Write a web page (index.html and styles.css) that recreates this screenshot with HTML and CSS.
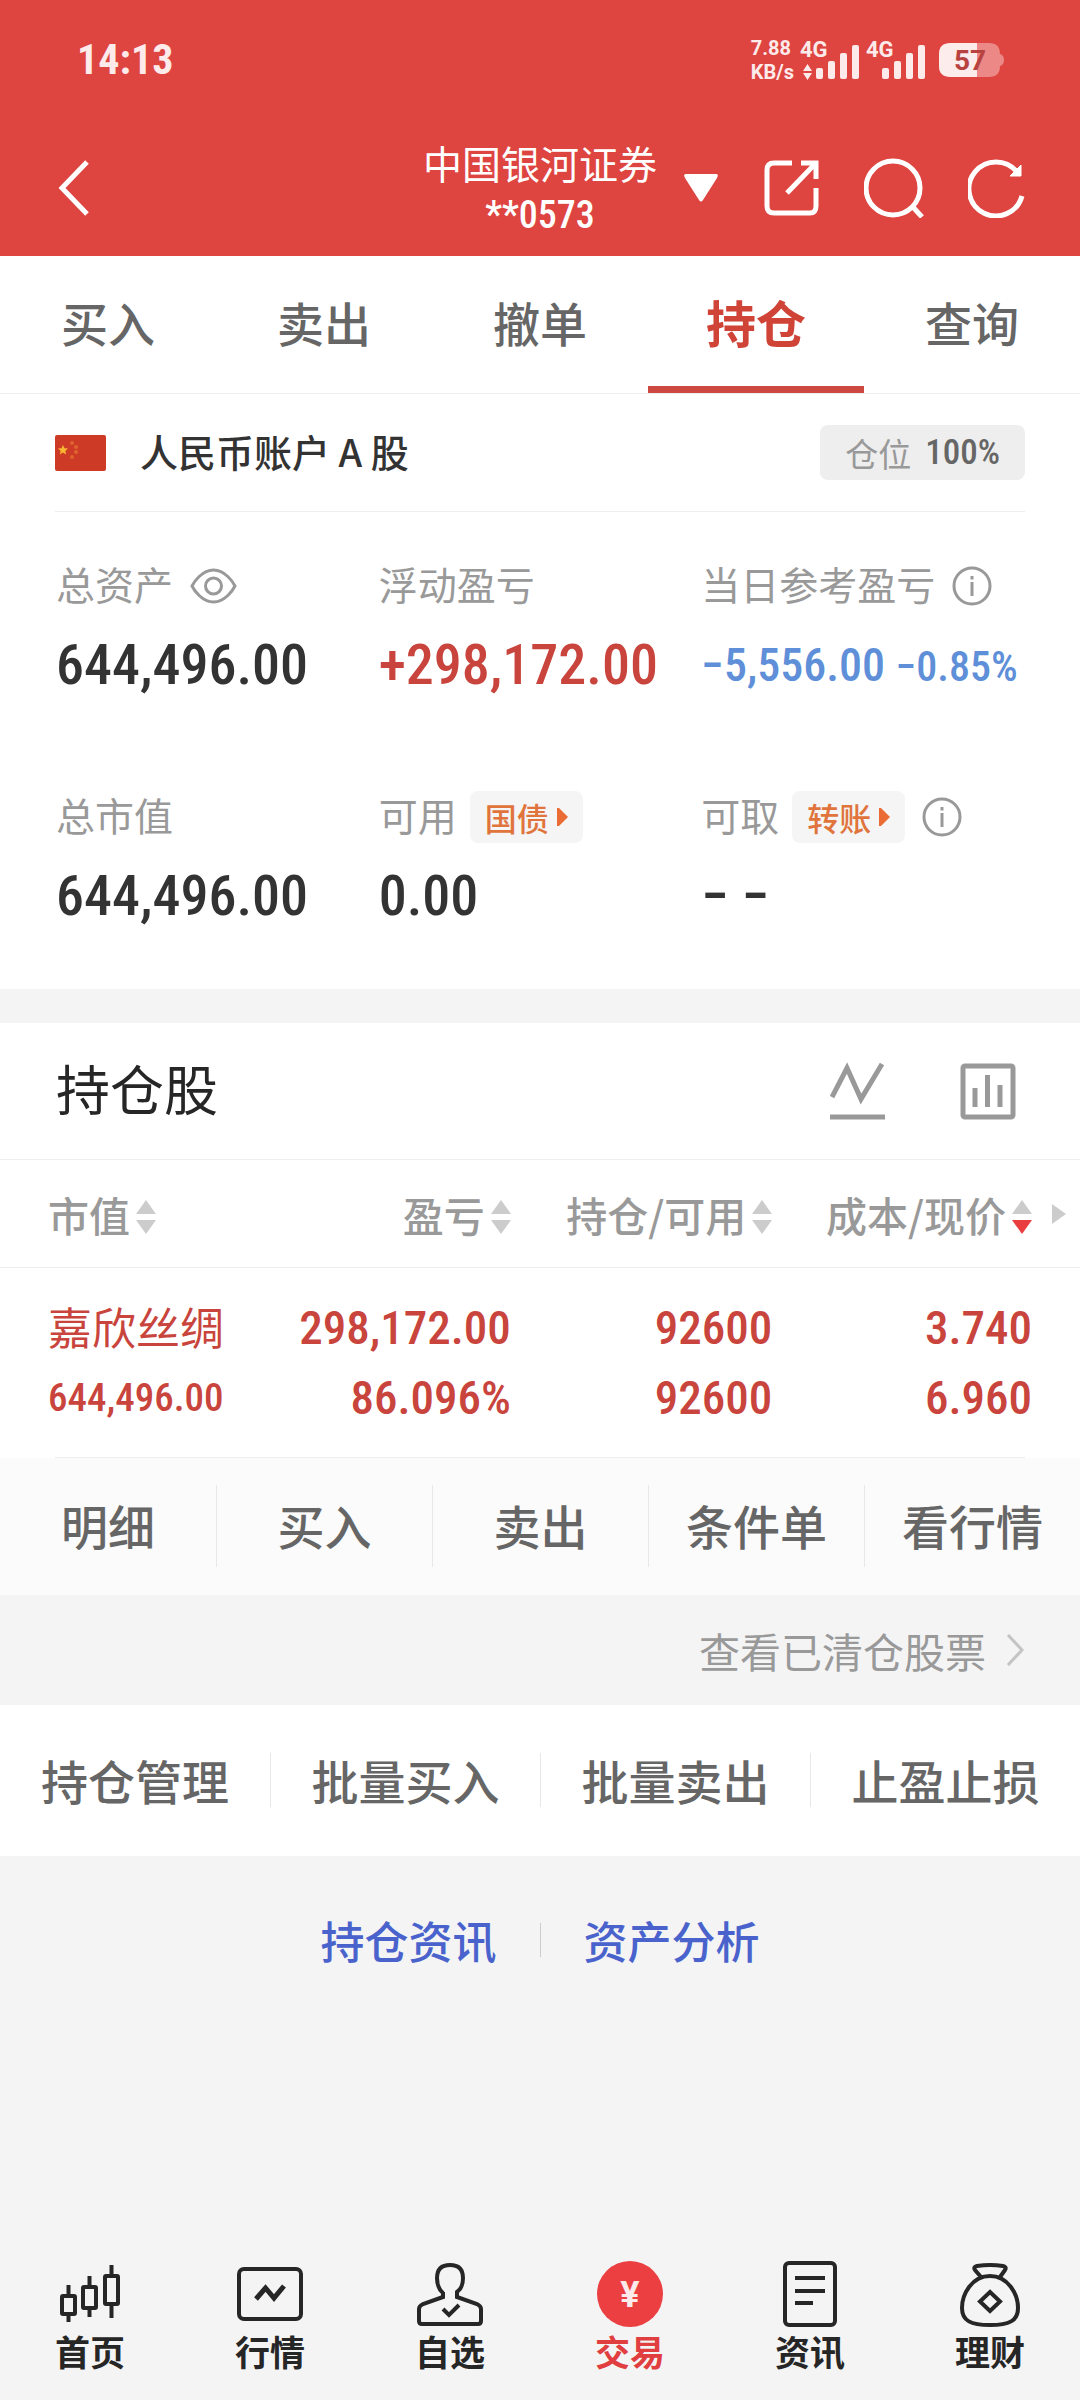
FILE: index.html
```html
<!DOCTYPE html>
<html lang="zh-CN">
<head>
<meta charset="utf-8">
<meta name="viewport" content="width=device-width, initial-scale=1">
<title>持仓</title>
<link rel="stylesheet" href="styles.css">
</head>
<body>
<div class="app">
  <header class="top">
    <div class="status">
      <span class="clock">14:13</span>
      <div class="status-right">
        <span class="speed"><span>7.88</span><span>KB/s</span></span>
        <svg class="signal" width="60" height="46" viewBox="0 -4 60 46" aria-label="4G">
          <text x="0" y="16">4G</text>
          <path d="M3 30L7.500 23L12 30ZM3 32L7.500 39L12 32Z"/>
          <rect x="16" y="27" width="7" height="11" rx="2"/><rect x="28" y="20" width="7" height="18" rx="2"/><rect x="40" y="12" width="7" height="26" rx="2"/><rect x="52" y="4" width="7" height="34" rx="2"/>
        </svg>
        <svg class="signal" width="60" height="46" viewBox="0 -4 60 46" aria-label="4G">
          <text x="0" y="16">4G</text>
          <rect x="16" y="27" width="7" height="11" rx="2"/><rect x="28" y="20" width="7" height="18" rx="2"/><rect x="40" y="12" width="7" height="26" rx="2"/><rect x="52" y="4" width="7" height="34" rx="2"/>
        </svg>
        <svg class="battery" width="66" height="34" viewBox="0 0 66 34" aria-label="57%">
          <path d="M12 0H50Q61 0 61 11Q65 12 65 17Q65 22 61 23Q61 34 50 34H12Q0 34 0 23V11Q0 0 12 0Z" fill="#ec8886"/>
          <path d="M12 0H38V34H12Q0 34 0 23V11Q0 0 12 0Z" fill="#fdecec"/>
          <text x="31" y="27" text-anchor="middle">57</text>
        </svg>
      </div>
    </div>
    <nav class="bar">
      <button class="icon-btn back" aria-label="返回"><svg width="32" height="58" viewBox="0 0 32 58"><path d="M29 3L4 29L29 55" fill="none" stroke="#fff" stroke-width="5"/></svg></button>
      <div class="title"><h1>中国银河证券</h1><span class="num">**0573</span></div>
      <div class="bar-right">
        <button class="icon-btn drop" aria-label="切换账户"><svg width="34" height="28" viewBox="0 0 34 28"><path d="M2 0H32Q35 0 33 4L19 26Q17 29 15 26L1 4Q-1 0 2 0Z" fill="#fff"/></svg></button>
        <button class="icon-btn" aria-label="分享"><svg width="56" height="56" viewBox="0 0 56 56" fill="none" stroke="#fff" stroke-width="5"><path d="M28 3H10Q3 3 3 10V46Q3 53 10 53H46Q52 53 52 46V28M37 3H52V19M52 3L23 33"/></svg></button>
        <button class="icon-btn" aria-label="搜索"><svg width="60" height="60" viewBox="0 0 60 60" fill="none" stroke="#fff" stroke-width="5"><circle cx="29" cy="30" r="27"/><path d="M48 48L58 59"/></svg></button>
        <button class="icon-btn" aria-label="刷新"><svg width="58" height="60" viewBox="0 0 58 60" fill="none" stroke="#fff" stroke-width="5"><path d="M54 38A27 27 0 1 1 49 14"/><path d="M53 7V18H42Z" fill="#fff" stroke-width="1"/></svg></button>
      </div>
    </nav>
  </header>

  <nav class="tabs">
    <a href="#">买入</a><a href="#">卖出</a><a href="#">撤单</a><a href="#" class="active" aria-current="page">持仓</a><a href="#">查询</a>
  </nav>

  <section class="account">
    <div class="account-row">
      <svg class="flag" width="51" height="36" viewBox="0 0 51 36"><rect width="51" height="36" rx="2" fill="#cd3a26"/><path d="M8 10l1.500 3.300 3.500.3-2.700 2.300.9 3.600L8 17.600l-3.200 1.900.9-3.600L3 13.600l3.500-.3z" fill="#f7b733"/><g fill="#e0622e"><circle cx="17" cy="8" r="2"/><circle cx="21" cy="12" r="2"/><circle cx="21" cy="17" r="2"/><circle cx="17" cy="22" r="2"/></g></svg>
      <h2>人民币账户 A 股</h2>
      <span class="ratio">仓位 <b class="num">100%</b></span>
    </div>
    <dl class="summary">
      <div><dt>总资产 <button class="icon-btn" aria-label="隐藏金额"><svg width="47" height="36" viewBox="0 0 47 36" fill="none" stroke="#999" stroke-width="3"><path d="M2 18C4 14 12 2 23.500 2S43 14 45 18C43 22 35 34 23.500 34S4 22 2 18Z"/><circle cx="23.500" cy="18" r="8"/></svg></button></dt><dd class="num">644,496.00</dd></div>
      <div><dt>浮动盈亏</dt><dd class="num up">+298,172.00</dd></div>
      <div><dt>当日参考盈亏 <button class="icon-btn" aria-label="说明"><svg width="40" height="40" viewBox="0 0 40 40" fill="none" stroke="#999" stroke-width="3"><circle cx="20" cy="20" r="18"/><path d="M20 16V30M20 10V13.500"/></svg></button></dt><dd class="num day">−5,556.00 <small>−0.85%</small></dd></div>
      <div><dt>总市值</dt><dd class="num">644,496.00</dd></div>
      <div><dt>可用 <button class="tag">国债<svg width="11" height="18" viewBox="0 0 11 18"><path d="M0 0H2L11 9L2 18H0Z"/></svg></button></dt><dd class="num">0.00</dd></div>
      <div><dt>可取 <button class="tag">转账<svg width="11" height="18" viewBox="0 0 11 18"><path d="M0 0H2L11 9L2 18H0Z"/></svg></button> <button class="icon-btn" aria-label="说明"><svg width="40" height="40" viewBox="0 0 40 40" fill="none" stroke="#999" stroke-width="3"><circle cx="20" cy="20" r="18"/><path d="M20 16V30M20 10V13.500"/></svg></button></dt><dd class="num">− −</dd></div>
    </dl>
  </section>

  <section class="holdings">
    <div class="holdings-head">
      <h2>持仓股</h2>
      <button class="icon-btn" aria-label="走势"><svg width="56" height="58" viewBox="0 0 56 58" fill="none" stroke="#999" stroke-width="5"><path d="M2 35L17 6L31 37L52 2M0 55H55"/></svg></button>
      <button class="icon-btn" aria-label="图表"><svg width="56" height="58" viewBox="0 0 56 58" fill="none" stroke="#999" stroke-width="5"><rect x="3" y="4" width="50" height="51" rx="2"/><path d="M15 26V45M27.500 13V45M40 23V45"/></svg></button>
    </div>
    <table>
      <thead>
        <tr>
          <th class="c-name"><button>市值<svg class="sort" width="20" height="34" viewBox="0 0 20 34"><path d="M10 0L20 14H0ZM10 34L20 20H0Z"/></svg></button></th>
          <th class="c-mid"><button>盈亏<svg class="sort" width="20" height="34" viewBox="0 0 20 34"><path d="M10 0L20 14H0ZM10 34L20 20H0Z"/></svg></button></th>
          <th class="c-mid"><button>持仓/可用<svg class="sort" width="20" height="34" viewBox="0 0 20 34"><path d="M10 0L20 14H0ZM10 34L20 20H0Z"/></svg></button></th>
          <th class="c-last"><button>成本/现价<svg class="sort" width="20" height="34" viewBox="0 0 20 34"><path d="M10 0L20 14H0Z"/><path class="on" d="M10 34L20 20H0Z"/></svg></button><svg class="more" width="14" height="20" viewBox="0 0 14 20"><path d="M0 0L14 10L0 20Z"/></svg></th>
        </tr>
      </thead>
      <tbody>
        <tr>
          <td class="c-name"><span class="stock">嘉欣丝绸</span><span class="num worth">644,496.00</span></td>
          <td class="num"><span>298,172.00</span><span>86.096%</span></td>
          <td class="num"><span>92600</span><span>92600</span></td>
          <td class="num c-last"><span>3.740</span><span>6.960</span></td>
        </tr>
      </tbody>
    </table>
    <div class="rule"></div>
    <div class="actions">
      <button>明细</button><button>买入</button><button>卖出</button><button>条件单</button><button>看行情</button>
    </div>
  </section>

  <a class="cleared" href="#">查看已清仓股票<svg width="18" height="32" viewBox="0 0 18 32" fill="none" stroke="#c4c4c4" stroke-width="3"><path d="M2 1L16 16L2 31"/></svg></a>

  <div class="batch">
    <button>持仓管理</button><button>批量买入</button><button>批量卖出</button><button>止盈止损</button>
  </div>

  <div class="links"><a href="#">持仓资讯</a><a href="#">资产分析</a></div>

  <nav class="tabbar">
    <a href="#"><svg viewBox="0 0 66 66"><g stroke-width="4"><rect x="5" y="35" width="13" height="18" rx="1"/><rect x="26" y="26" width="13" height="21" rx="1"/><rect x="48" y="15" width="13" height="28" rx="1"/><path d="M11.500 24V34M11.500 54V61M32.500 15V25M32.500 48V56M54.500 4V14M54.500 44V57"/></g></svg>首页</a>
    <a href="#"><svg viewBox="0 0 66 66"><rect x="2" y="8" width="62" height="50" rx="5"/><path d="M19 38L28.500 27L37 37L47 25" stroke-width="5"/></svg>行情</a>
    <a href="#"><svg viewBox="0 0 66 66"><path d="M26 31V36L6 43Q2 45 2 48V60Q2 63 5 63H61Q64 63 64 60V48Q64 45 60 43L40 36V31Q46 27 46 17Q46 4 33 4T20 17Q20 27 26 32"/><path d="M26 48L32 54L42 44"/></svg>自选</a>
    <a href="#" class="active" aria-current="page"><svg viewBox="0 0 66 66"><circle class="disc" cx="33" cy="33" r="33"/><text x="33" y="46" text-anchor="middle">¥</text></svg>交易</a>
    <a href="#"><svg viewBox="0 0 66 66"><rect x="8" y="2" width="50" height="62" rx="4"/><path d="M18 17H48M18 30H48M18 42H36"/></svg>资讯</a>
    <a href="#"><svg viewBox="0 0 66 66"><path d="M33 15C15 15 5 33 5 47C5 60 14 64 33 64S61 60 61 47C61 33 51 15 33 15ZM24 16L18 9Q16 6 20 5Q33 3 46 5Q50 6 48 9L43 16"/><path d="M33 31L43 40.500L33 50L23 40.500Z"/></svg>理财</a>
  </nav>
</div>
</body>
</html>
```
FILE: styles.css
```css
* { box-sizing: border-box; }

body {
  margin: 0;
  background: #f4f4f5;
  color: #333;
  font-family: "Noto Sans CJK SC", "Noto Sans", sans-serif;
}

h1, h2, dl, dd { margin: 0; font-weight: 400; }
a { color: inherit; text-decoration: none; }
button { margin: 0; padding: 0; border: 0; background: none; color: inherit; font: inherit; }
svg { display: block; flex: none; }

.app { min-height: 100vh; display: flex; flex-direction: column; }
.num { font-family: "Roboto Condensed", "Liberation Sans Narrow", "Noto Sans CJK SC", sans-serif; font-weight: 500; }
.icon-btn { display: flex; }

/* header */
.top { background: #de4440; color: #fff; }
.status { display: flex; justify-content: space-between; align-items: center; height: 120px; padding: 0 75px 0 77px; color: #fdeaea; }
.clock { font: 700 42px/48px "Roboto Condensed", "Noto Sans CJK SC", sans-serif; }
.status-right { display: flex; align-items: center; gap: 6px; }
.speed { display: flex; flex-direction: column; font: 700 20px/24px Roboto, sans-serif; }
.signal { overflow: visible; fill: #fdeaea; font: 700 22px Roboto, sans-serif; }
.battery { margin-left: 7px; fill: #b8423f; font: 700 28px Roboto, sans-serif; }
.bar { display: grid; grid-template-columns: 1fr auto 1fr; align-items: center; height: 136px; }
.back { justify-self: start; padding-left: 58px; }
.title { display: flex; flex-direction: column; align-items: center; }
.title h1 { font-size: 39px; line-height: 54px; }
.title .num { font-size: 38px; line-height: 52px; }
.bar-right { display: flex; justify-content: flex-end; align-items: center; gap: 44px; padding-right: 54px; }
.drop { margin-right: 2px; }

/* tabs */
.tabs { display: grid; grid-template-columns: repeat(5, 1fr); height: 138px; border-bottom: 1px solid #eee; background: #fff; }
.tabs a { display: flex; align-items: center; justify-content: center; border-bottom: 7px solid transparent; font-size: 47px; font-weight: 500; color: #666; }
.tabs .active { border-bottom-color: #cc4840; color: #d04438; font-size: 50px; font-weight: 700; }

/* account summary */
.account { background: #fff; }
.account-row { display: flex; align-items: center; height: 118px; margin: 0 55px; border-bottom: 1px solid #eee; }
.account h2 { margin-left: 34px; padding-bottom: 4px; font-size: 38px; font-weight: 500; }
.ratio { display: flex; align-items: center; gap: 14px; height: 55px; margin-left: auto; padding: 0 25px; border-radius: 8px; background: #eee; color: #999; font-size: 33px; }
.ratio b { color: #666; font-size: 35px; }
.summary { display: grid; grid-template-columns: repeat(3, 1fr); row-gap: 92px; padding: 48px 56px 61px 56px; }
.summary dt { display: flex; gap: 13px; height: 52px; color: #999; font-size: 39px; line-height: 46px; white-space: nowrap; }
.summary dd { margin-top: 21px; font-size: 56px; line-height: 64px; white-space: nowrap; }
.summary .icon-btn { align-self: center; margin-left: 4px; }
.summary .up { color: #c8443c; }
.summary .day { color: #5e8fd8; font-size: 46px; }
.day small { font-size: 42px; }
.tag { display: flex; align-items: center; gap: 8px; height: 52px; padding: 0 15px; border-radius: 8px; background: #f5f5f5; color: #e0743c; font-size: 32px; font-weight: 500; }
.tag svg { fill: #ea6c34; }

/* holdings */
.holdings { margin-top: 34px; background: #fff; }
.holdings-head { display: flex; align-items: center; gap: 74px; height: 137px; padding: 0 64px 0 56px; border-bottom: 1px solid #eee; }
.holdings-head h2 { margin-right: auto; padding-bottom: 8px; color: #262626; font-size: 54px; }
table { width: 100%; table-layout: fixed; border-collapse: collapse; }
th { height: 107px; padding: 0; border-bottom: 1px solid #eee; color: #999; font-size: 41px; font-weight: 500; text-align: right; white-space: nowrap; }
th button { display: inline-flex; gap: 6px; height: 60px; line-height: 54px; vertical-align: middle; }
.c-mid { width: 24.2%; }
th.c-last { position: relative; width: 28.5%; }
table .c-name { padding-left: 48px; text-align: left; }
table .c-last { padding-right: 48px; }
.sort, .more { fill: #ccc; }
.sort { align-self: center; }
.sort .on { fill: #e93d40; }
.more { position: absolute; right: 14px; top: 44px; }
td { padding: 25px 0 24px; color: #c8443c; text-align: right; }
td span { display: block; font-size: 47px; line-height: 70px; }
td .stock { padding-bottom: 4px; font-size: 44px; line-height: 66px; }
td .worth { font-size: 39px; }
.rule { height: 1px; margin: 0 55px; background: #eee; }
.actions { display: grid; grid-template-columns: repeat(5, 1fr); align-items: center; height: 137px; background: #fbfbfb; }
.actions button { height: 82px; padding-bottom: 2px; color: #666; font-size: 47px; line-height: 78px; font-weight: 500; }
.batch button { height: 54px; color: #666; font-size: 47px; line-height: 54px; font-weight: 500; }
.actions button + button, .batch button + button { border-left: 1px solid #e8e8e8; }

.cleared { display: flex; align-items: center; justify-content: flex-end; gap: 20px; height: 110px; padding-right: 56px; color: #999; font-size: 41px; }
.batch { display: grid; grid-template-columns: repeat(4, 1fr); align-items: center; height: 151px; background: #fff; }
.links { display: flex; justify-content: center; align-items: center; height: 168px; color: #4a63cc; font-size: 44px; font-weight: 500; }
.links a { padding: 0 43px; line-height: 34px; }
.links a + a { border-left: 1px solid #ccc; }

/* bottom navigation */
.tabbar { display: grid; grid-template-columns: repeat(6, 1fr); margin-top: auto; padding-bottom: 27px; color: #262626; }
.tabbar a { display: flex; flex-direction: column; align-items: center; gap: 2px; font-size: 35px; line-height: 44px; font-weight: 700; }
.tabbar svg { width: 66px; height: 66px; fill: none; stroke: #262626; stroke-width: 4; }
.tabbar .active { color: #e03e3f; }
.tabbar .disc { fill: #eb3f41; stroke: none; }
.tabbar text { fill: #fdeaea; stroke: none; font: 700 36px Roboto, sans-serif; }
```
